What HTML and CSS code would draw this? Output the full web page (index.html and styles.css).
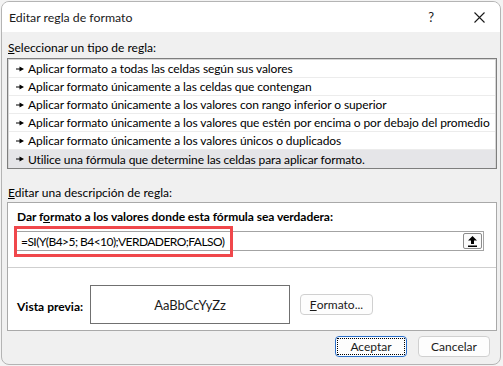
FILE: index.html
```html
<!DOCTYPE html>
<html lang="es">
<head>
<meta charset="utf-8">
<title>Editar regla de formato</title>
<link rel="stylesheet" href="styles.css">
</head>
<body>
<div class="window">
  <div class="titlebar">
    <span class="title">Editar regla de formato</span>
    <span class="help">?</span>
    <svg class="close" width="11" height="11" viewBox="0 0 11 11"><path d="M0.5 0.5L10.5 10.5M10.5 0.5L0.5 10.5" stroke="#1a1a1a" stroke-width="1.1" fill="none"/></svg>
  </div>
  <div class="content">
    <div class="label l1"><u>S</u>eleccionar un tipo de regla:</div>
    <div class="list">
      <div class="row"><svg class="bul" width="8" height="6" viewBox="0 0 8 6"><path d="M0 2.5H4V3.5H0Z M3.5 0.5L8 3L3.5 5.5Z" fill="#000"/></svg><span>Aplicar formato a todas las celdas según sus valores</span></div>
      <div class="row"><svg class="bul" width="8" height="6" viewBox="0 0 8 6"><path d="M0 2.5H4V3.5H0Z M3.5 0.5L8 3L3.5 5.5Z" fill="#000"/></svg><span>Aplicar formato únicamente a las celdas que contengan</span></div>
      <div class="row"><svg class="bul" width="8" height="6" viewBox="0 0 8 6"><path d="M0 2.5H4V3.5H0Z M3.5 0.5L8 3L3.5 5.5Z" fill="#000"/></svg><span>Aplicar formato únicamente a los valores con rango inferior o superior</span></div>
      <div class="row"><svg class="bul" width="8" height="6" viewBox="0 0 8 6"><path d="M0 2.5H4V3.5H0Z M3.5 0.5L8 3L3.5 5.5Z" fill="#000"/></svg><span>Aplicar formato únicamente a los valores que estén por encima o por debajo del promedio</span></div>
      <div class="row"><svg class="bul" width="8" height="6" viewBox="0 0 8 6"><path d="M0 2.5H4V3.5H0Z M3.5 0.5L8 3L3.5 5.5Z" fill="#000"/></svg><span>Aplicar formato únicamente a los valores únicos o duplicados</span></div>
      <div class="row selected"><svg class="bul" width="8" height="6" viewBox="0 0 8 6"><path d="M0 2.5H4V3.5H0Z M3.5 0.5L8 3L3.5 5.5Z" fill="#000"/></svg><span>Utilice una fórmula que determine las celdas para aplicar formato.</span></div>
    </div>
    <div class="label l2"><u>E</u>ditar una descripción de regla:</div>
    <div class="desc">
      <div class="heading">Dar f<u>o</u>rmato a los valores donde esta fórmula sea verdadera:</div>
      <div class="input">
        <span class="formula">=SI(Y(B4&gt;5; B4&lt;10);VERDADERO;FALSO)</span>
        <span class="pick"><svg width="9" height="11" viewBox="0 0 9 11"><path d="M4.5 0L9 4.5H6V8H3V4.5H0Z" fill="#000"/><rect x="0" y="9.5" width="9" height="1.5" fill="#000"/></svg></span>
        <span class="highlight"></span>
      </div>
      <div class="sep"></div>
      <div class="preview-row">
        <span class="plabel">Vista previa:</span>
        <div class="preview">AaBbCcYyZz</div>
        <button class="btn fmt"><u>F</u>ormato...</button>
      </div>
    </div>
    <div class="actions">
      <button class="btn ok"><span class="focus">Aceptar</span></button>
      <button class="btn">Cancelar</button>
    </div>
  </div>
</div>
</body>
</html>
```

FILE: styles.css
```css
html, body {
  margin: 0;
  padding: 0;
}
body {
  background: #f3f3f3;
  font-family: "Lato", "Noto Sans", sans-serif;
  font-size: 12px;
  color: #000;
  width: 503px;
  height: 366px;
  overflow: hidden;
}
.window {
  margin: 1px 0 0 1px;
  width: 500px;
  height: 364px;
  box-sizing: border-box;
  border: 1px solid #b4b4b4;
  border-radius: 8px;
  background: #f0f0f0;
  overflow: hidden;
}
.titlebar {
  height: 30px;
  background: #fff;
  display: flex;
  align-items: center;
  padding-left: 7px;
}
.title {
  flex: 1;
  color: #1a1a1a;
  font-size: 12.3px;
}
.help {
  font-size: 13px;
  color: #1a1a1a;
  margin-right: 40px;
}
.close {
  margin-right: 15px;
}
.content {
  padding: 0 3px 0 5px;
}
.label {
  height: 16px;
  line-height: 16px;
  padding-left: 1px;
  white-space: nowrap;
}
.l1 { margin-top: 8px; }
.l2 { margin-top: 16px; }
.list {
  margin-top: 2px;
  height: 111px;
  box-sizing: border-box;
  border: 1px solid #7e7e7e;
  box-shadow: inset 0 0 0 1px #d6d6d6;
  background: #fff;
  padding: 1px 1px 0 1px;
}
.row {
  height: 18px;
  box-sizing: border-box;
  border-bottom: 1px solid #ececec;
  display: flex;
  align-items: center;
  padding-left: 7px;
  white-space: nowrap;
  overflow: hidden;
  letter-spacing: -0.1px;
}
.row .bul {
  margin-right: 4px;
  flex: none;
}
.row.selected {
  background: #e5e5e8;
  border-bottom: none;
}
.desc {
  margin-top: 1px;
  height: 129px;
  box-sizing: border-box;
  border: 1px solid #a9a9a9;
  background: #fff;
}
.heading {
  margin-top: 6px;
  padding-left: 9px;
  font-weight: bold;
  height: 16px;
  line-height: 16px;
  white-space: nowrap;
  letter-spacing: -0.05px;
}
.input {
  position: relative;
  margin: 6px 0 0 8px;
  width: 468px;
  height: 20px;
  box-sizing: border-box;
  border: 1px solid #a3a3a3;
  display: flex;
  align-items: center;
  padding-left: 4px;
}
.formula {
  flex: 1;
  white-space: nowrap;
  letter-spacing: -0.55px;
}
.pick {
  width: 19px;
  height: 16px;
  box-sizing: border-box;
  border: 1px solid #8c8c8c;
  border-radius: 2px;
  background: #fbfbfb;
  display: flex;
  align-items: center;
  justify-content: center;
  margin-right: 1px;
}
.highlight {
  position: absolute;
  left: -3px;
  top: -6px;
  width: 219px;
  height: 31px;
  box-sizing: border-box;
  border: 3px solid #f0474b;
  pointer-events: none;
}
.sep {
  margin-top: 16px;
  height: 1px;
  background: #cfcfcf;
}
.preview-row {
  margin-top: 17px;
  display: flex;
  align-items: center;
  padding-left: 9px;
}
.plabel {
  width: 73px;
  flex: none;
  font-weight: bold;
  white-space: nowrap;
  padding-top: 4px;
}
.preview {
  width: 200px;
  flex: none;
  height: 39px;
  box-sizing: border-box;
  border: 1px solid #707070;
  display: flex;
  align-items: center;
  justify-content: center;
  color: #1a1a1a;
  font-size: 13px;
}
.btn {
  font-family: inherit;
  font-size: 12px;
  color: #1a1a1a;
  background: #fdfdfd;
  border: 1px solid #d0d0d0;
  border-radius: 4px;
  width: 72px;
  height: 21px;
  padding: 0;
  display: flex;
  align-items: center;
  justify-content: center;
  flex: none;
}
.fmt {
  margin-left: 10px;
  width: 73px;
}
.actions {
  margin-top: 5px;
  display: flex;
  justify-content: flex-end;
  gap: 11px;
  padding-right: 7px;
}
.ok {
  border-color: #2a6fc9;
  padding: 1px;
}
.ok .focus {
  flex: 1;
  align-self: stretch;
  border: 1px dotted #000;
  display: flex;
  align-items: center;
  justify-content: center;
}
```
